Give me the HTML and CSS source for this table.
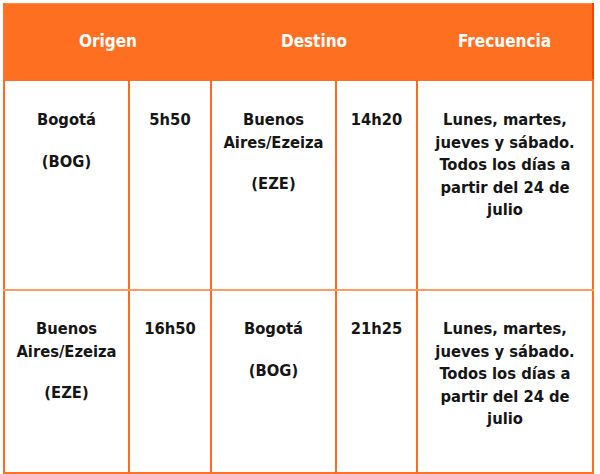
FILE: index.html
```html
<!DOCTYPE html>
<html lang="es">
<head>
<meta charset="utf-8">
<link rel="stylesheet" href="styles.css">
</head>
<body>
<table class="flights">
  <colgroup>
    <col class="c1"><col class="c2"><col class="c3"><col class="c4"><col class="c5">
  </colgroup>
  <thead>
    <tr class="head">
      <th colspan="2">Origen</th>
      <th colspan="2">Destino</th>
      <th>Frecuencia</th>
    </tr>
  </thead>
  <tbody>
    <tr class="row1">
      <td><p>Bogotá</p><p>(BOG)</p></td>
      <td><p>5h50</p></td>
      <td><p>Buenos Aires/Ezeiza</p><p>(EZE)</p></td>
      <td><p>14h20</p></td>
      <td><p>Lunes, martes, jueves y sábado. Todos los días a partir del 24 de julio</p></td>
    </tr>
    <tr class="row2">
      <td><p>Buenos Aires/Ezeiza</p><p>(EZE)</p></td>
      <td><p>16h50</p></td>
      <td><p>Bogotá</p><p>(BOG)</p></td>
      <td><p>21h25</p></td>
      <td><p>Lunes, martes, jueves y sábado. Todos los días a partir del 24 de julio</p></td>
    </tr>
  </tbody>
</table>
</body>
</html>
```
FILE: styles.css
```css
html, body {
  margin: 0;
  padding: 0;
  background: #ffffff;
}
body {
  padding: 3px 0 0 3px;
  font-family: "DejaVu Sans", Verdana, sans-serif;
  font-stretch: condensed;
  font-weight: bold;
  color: #161616;
}
.flights {
  border-collapse: collapse;
  table-layout: fixed;
  width: 591px;
  border-left: 2px solid #ff7127;
  border-right: 2px solid #ff3c0a;
  border-top: 1px solid #ff8a4a;
  border-bottom: 3px solid #ff7127;
}
.c1 { width: 125px; }
.c2 { width: 82px; }
.c3 { width: 125px; }
.c4 { width: 81px; }
.c5 { width: 176px; }
.head th {
  height: 73px;
  padding: 0 0 2px 0;
  background: #ff6f21;
  color: #ffffff;
  font-size: 17px;
  font-weight: bold;
  text-align: center;
  vertical-align: middle;
  border: 0;
}
td {
  vertical-align: top;
  text-align: center;
  font-size: 16.4px;
  line-height: 22.5px;
  padding: 28px 5px 0 5px;
  border-left: 2px solid #ff6a1f;
  border-right: 2px solid #ff6a1f;
}
.row1 td {
  height: 180px;
  border-top: 2px solid #ff6f21;
  border-bottom: 2px solid #ff9a60;
}
.row2 td {
  height: 154px;
  padding-top: 27px;
}
td p {
  margin: 0 0 19px 0;
}
td p:last-child {
  margin-bottom: 0;
}
```
